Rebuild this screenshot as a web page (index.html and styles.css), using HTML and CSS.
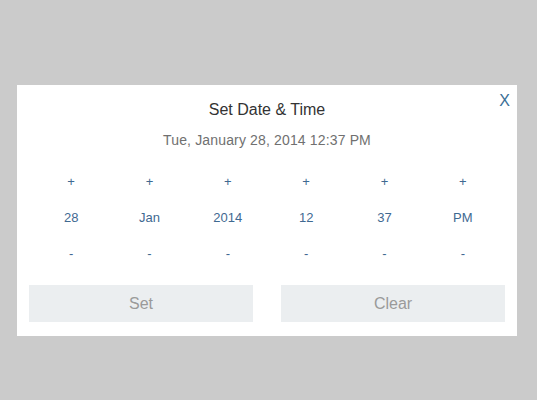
FILE: index.html
```html
<!DOCTYPE html>
<html>
<head>
<meta charset="utf-8">
<link rel="stylesheet" href="styles.css">
</head>
<body>
<div class="dialog">
  <a class="close">X</a>
  <div class="title">Set Date &amp; Time</div>
  <div class="current">Tue, January 28, 2014 12:37 PM</div>
  <table class="picker">
    <tr class="inc">
      <td>+</td><td>+</td><td>+</td><td>+</td><td>+</td><td>+</td>
    </tr>
    <tr class="val">
      <td>28</td><td>Jan</td><td>2014</td><td>12</td><td>37</td><td>PM</td>
    </tr>
    <tr class="dec">
      <td>-</td><td>-</td><td>-</td><td>-</td><td>-</td><td>-</td>
    </tr>
  </table>
  <div class="actions">
    <button class="btn">Set</button>
    <button class="btn">Clear</button>
  </div>
</div>
</body>
</html>
```
FILE: styles.css
```css
html, body {
  margin: 0;
  padding: 0;
}
body {
  background: #cbcbcb;
  font-family: "Liberation Sans", Arial, sans-serif;
  height: 400px;
  padding-top: 85px;
  box-sizing: border-box;
}
.dialog {
  position: relative;
  width: 500px;
  margin-left: 17px;
  background: #ffffff;
  padding: 15px 12px 14px;
  box-sizing: border-box;
}
.close {
  position: absolute;
  top: 6px;
  right: 7px;
  font-size: 16px;
  line-height: 20px;
  color: #3b6f96;
  cursor: pointer;
}
.title {
  text-align: center;
  font-size: 16px;
  line-height: 20px;
  color: #333333;
}
.current {
  margin-top: 10px;
  text-align: center;
  font-size: 14px;
  line-height: 20px;
  color: #707070;
  letter-spacing: 0.15px;
}
.picker {
  width: 470px;
  margin: 14px auto 0;
  margin-left: 3px;
  border-collapse: collapse;
  table-layout: fixed;
}
.picker td {
  padding: 8px 0;
  line-height: 20px;
  font-size: 13px;
  text-align: center;
  color: #3f6991;
}
.actions {
  margin-top: 13px;
  display: flex;
  gap: 28px;
}
.btn {
  flex: 1;
  height: 37px;
  border: none;
  background: #ebeef0;
  color: #9a9a9a;
  font-family: "Liberation Sans", Arial, sans-serif;
  font-size: 16px;
  padding: 0;
}
```
